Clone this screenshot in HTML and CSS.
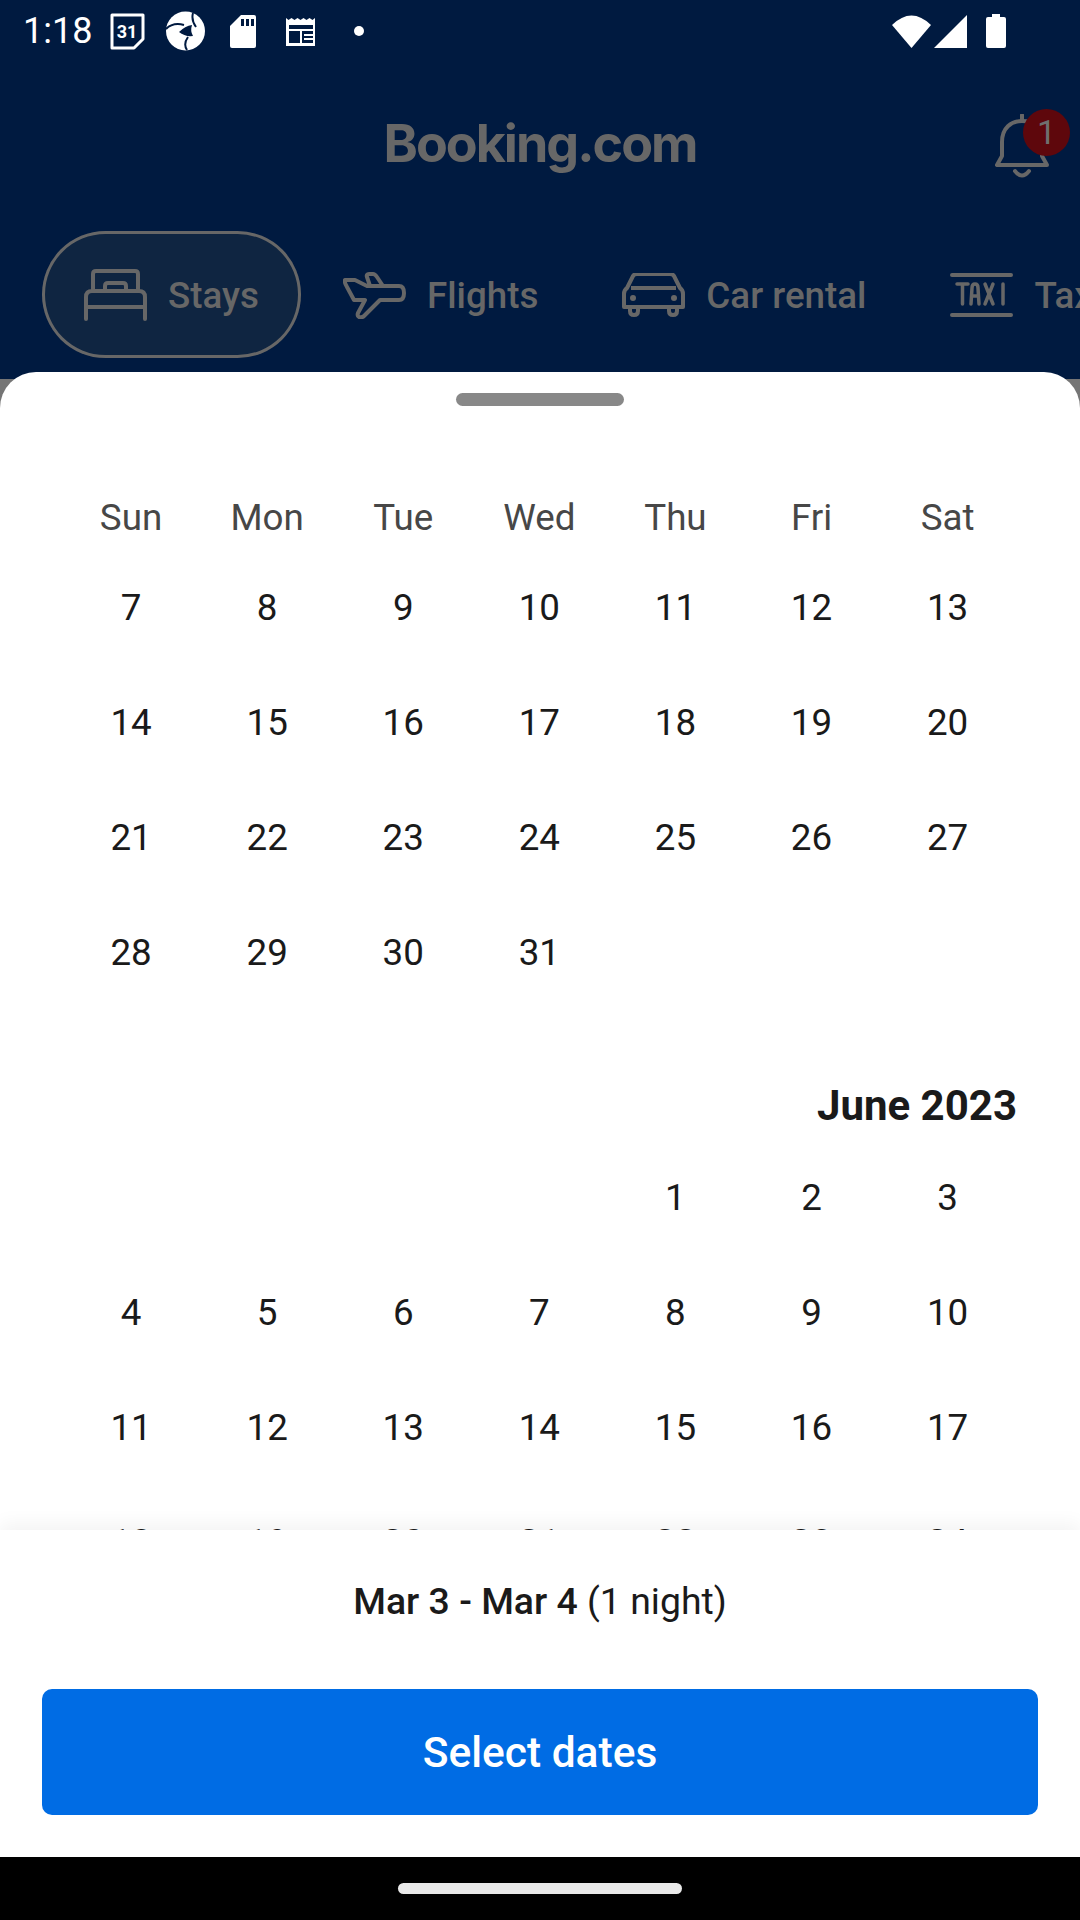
FILE: index.html
```html
<!DOCTYPE html>
<html>

<head>
    <meta charset="UTF-8">
    <meta name="viewport" content="width=device-width, initial-scale=1.0">
    <title>Select dates</title>
    <link rel="stylesheet" href="styles.css">
</head>

<body>
    <!-- Status bar -->
    <div class="status">
        <span class="time">1:18</span>
        <div class="status-icons">
            <span class="slot">
                <svg width="35" height="37" viewBox="0 0 35 37"><path d="M2 2h31v24l-9 9H2z" fill="none" stroke="#fff" stroke-width="3" stroke-linejoin="round"/><text x="17" y="25" class="cal-num">31</text></svg>
            </span>
            <span class="slot">
                <svg width="39" height="40" viewBox="0 0 39 40"><circle cx="19.500" cy="20" r="19.500" fill="#fff"/><path d="M13 21q6-6 13-7q-2 6 1 11q-8 1-14-4z" fill="#001a40"/><path d="M0 18q7-7 18-4M27 2q-2 7 3 14M21 39q-4-6 1-13" fill="none" stroke="#001a40" stroke-width="2"/></svg>
            </span>
            <span class="slot">
                <svg width="26" height="33" viewBox="0 0 26 33"><path d="M11 0h13a2 2 0 0 1 2 2v29a2 2 0 0 1-2 2H2a2 2 0 0 1-2-2V11z" fill="#fff"/><path d="M11 4h3v7h-3zM16 4h3v7h-3zM21 4h3v7h-3z" fill="#001a40"/></svg>
            </span>
            <span class="slot">
                <svg width="32" height="30" viewBox="0 0 32 30"><path d="M1 2l2.500 2 3-2 3 2 3-2 3 2 3-2 3 2 3-2 3 2 2.500-2v28H1z" fill="#fff"/><path d="M4 9h24v18H4z" fill="#001a40"/><path d="M4 13h24v2H4zM15 15h2v12h-2zM19 18h9v2h-9zM19 22h9v2h-9z" fill="#fff"/></svg>
            </span>
            <span class="slot"><span class="dot"></span></span>
        </div>
        <div class="status-right">
            <svg width="39" height="33" viewBox="0 0 39 33"><path d="M0 10Q19.500-9 39 10L19.500 33z" fill="#fff"/></svg>
            <svg width="33" height="33" viewBox="0 0 33 33"><path d="M33 0v33H0z" fill="#fff"/></svg>
            <svg width="20" height="34" viewBox="0 0 20 34"><path d="M6 0h8v3h4a2 2 0 0 1 2 2v27a2 2 0 0 1-2 2H2a2 2 0 0 1-2-2V5a2 2 0 0 1 2-2h4z" fill="#fff"/></svg>
        </div>
    </div>

    <!-- Header with logo and bell -->
    <div class="header">
        <span class="logo">Booking.com</span>
        <div class="bell">
            <svg width="54" height="64" viewBox="0 0 54 64"><path d="M2 51h50l-5-9V28C47 14 38 7 27 7S7 14 7 28v14z" fill="none" stroke="#676767" stroke-width="4" stroke-linejoin="round"/><path d="M27 1v6" stroke="#676767" stroke-width="4" stroke-linecap="round"/><path d="M20 57q7 9 14 0" fill="none" stroke="#676767" stroke-width="4" stroke-linecap="round"/></svg>
            <span class="badge">1</span>
        </div>
    </div>

    <!-- Product tabs -->
    <div class="tabs">
        <div class="tab active">
            <svg width="63" height="52" viewBox="0 0 63 52"><path d="M2 50V28q0-6 6-6h47q6 0 6 6v22M2 38h59M9 22V5q0-3 3-3h39q3 0 3 3v17M21 22v-5q0-3 3-3h15q3 0 3 3v5" fill="none" stroke="#676767" stroke-width="4" stroke-linecap="round"/></svg>
            <span>Stays</span>
        </div>
        <div class="tab">
            <svg width="63" height="48" viewBox="0 0 63 48"><path d="M2 9l10 0 12 6h32q5 0 5 7t-5 7H37L21 45q-2 2-5 1-2-1-1-4l7-13H11L4 16Q1 11 2 9zM27 15l-3-9q-1-3 2-3h4q2 0 4 3l6 9" fill="none" stroke="#676767" stroke-width="4" stroke-linejoin="round"/></svg>
            <span>Flights</span>
        </div>
        <div class="tab">
            <svg width="63" height="44" viewBox="0 0 63 44"><path d="M2 34V21q0-4 3-6l6-12q1-2 4-2h33q3 0 4 2l6 12q3 2 3 6v13zM9 15h45M8 34v4q0 4 4 4t4-4v-4M47 34v4q0 4 4 4t4-4v-4" fill="none" stroke="#676767" stroke-width="4" stroke-linejoin="round"/><circle cx="11" cy="25" r="3" fill="#676767"/><circle cx="52" cy="25" r="3" fill="#676767"/></svg>
            <span>Car rental</span>
        </div>
        <div class="tab">
            <svg width="63" height="44" viewBox="0 0 63 44"><path d="M2 2h59M2 42h59" stroke="#676767" stroke-width="4" stroke-linecap="round"/><path d="M7 11h11M12.500 11v20M21 31l1-16q0-4 3-4t3 4l1 16M22 23h6M35 11l8 20M43 11l-8 20M53 11v20" fill="none" stroke="#676767" stroke-width="3.500" stroke-linecap="round"/></svg>
            <span>Taxis</span>
        </div>
    </div>

    <!-- Bottom sheet -->
    <div class="sheet-back">
        <div class="sheet">
            <div class="handle"></div>
            <div class="cal-head cal-grid">
                <span>Sun</span><span>Mon</span><span>Tue</span><span>Wed</span><span>Thu</span><span>Fri</span><span>Sat</span>
            </div>
            <div class="cal-scroll">
                <div class="cal-grid">
                    <span>7</span><span>8</span><span>9</span><span>10</span><span>11</span><span>12</span><span>13</span>
                    <span>14</span><span>15</span><span>16</span><span>17</span><span>18</span><span>19</span><span>20</span>
                    <span>21</span><span>22</span><span>23</span><span>24</span><span>25</span><span>26</span><span>27</span>
                    <span>28</span><span>29</span><span>30</span><span>31</span>
                </div>
                <h2 class="month">June 2023</h2>
                <div class="cal-grid">
                    <span></span><span></span><span></span><span></span><span>1</span><span>2</span><span>3</span>
                    <span>4</span><span>5</span><span>6</span><span>7</span><span>8</span><span>9</span><span>10</span>
                    <span>11</span><span>12</span><span>13</span><span>14</span><span>15</span><span>16</span><span>17</span>
                    <span>18</span><span>19</span><span>20</span><span>21</span><span>22</span><span>23</span><span>24</span>
                </div>
            </div>
            <div class="footer">
                <p class="summary"><b>Mar 3 - Mar 4</b> (1 night)</p>
                <button type="button" class="select">Select dates</button>
            </div>
        </div>
    </div>

    <!-- Gesture bar -->
    <div class="nav">
        <div class="pill"></div>
    </div>
</body>

</html>
```

FILE: styles.css
```css
* {
    box-sizing: border-box;
}

body {
    margin: 0;
    width: 1080px;
    height: 1920px;
    overflow: hidden;
    display: flex;
    flex-direction: column;
    background-color: #001a40;
    font-family: Roboto, sans-serif;
}

svg {
    display: block;
    flex: none;
}

.status {
    height: 62px;
    display: flex;
    align-items: center;
    padding: 0 0 0 23px;
    color: #FFFFFF;
}

.time {
    font-size: 36px;
    width: 75px;
}

.status-icons {
    display: flex;
    align-items: center;
}

.slot {
    width: 58px;
    display: flex;
    justify-content: center;
}

.cal-num {
    fill: #FFFFFF;
    font-family: Roboto, sans-serif;
    font-size: 18px;
    font-weight: 700;
    text-anchor: middle;
}

.dot {
    width: 10px;
    height: 10px;
    border-radius: 50%;
    background-color: #FFFFFF;
}

.status-right {
    margin-left: auto;
    margin-right: 74px;
    display: flex;
    align-items: center;
    gap: 3px;
}

.status-right svg:last-child {
    margin-left: 16px;
}

.header {
    height: 169px;
    display: flex;
    align-items: center;
    justify-content: center;
    padding-bottom: 7px;
    position: relative;
}

.logo {
    color: #676767;
    font-family: Inter, sans-serif;
    font-size: 52px;
    font-weight: 700;
    letter-spacing: -2px;
}

.bell {
    position: absolute;
    left: 995px;
    top: 52px;
}

.badge {
    position: absolute;
    left: 28px;
    top: -5px;
    width: 47px;
    height: 47px;
    border-radius: 50%;
    background-color: #5e070c;
    color: #6f6f6f;
    font-size: 34px;
    line-height: 47px;
    text-align: center;
}

.tabs {
    height: 141px;
    display: flex;
    align-items: flex-start;
    overflow: hidden;
    padding-left: 42px;
}

.tab {
    height: 127px;
    flex: none;
    display: flex;
    align-items: center;
    gap: 21px;
    padding: 0 42px;
    border-radius: 64px;
    color: #676767;
    font-size: 36.75px;
    font-weight: 500;
}

.tab span {
    margin-top: 2px;
}

.tab.active {
    background-color: #0f2541;
    box-shadow: inset 0 0 0 3px #676767;
}

.sheet-back {
    flex: 1;
    min-height: 0;
    background: linear-gradient(#001a40 7px, #757575 7px);
}

.sheet {
    height: 100%;
    display: flex;
    flex-direction: column;
    background-color: #FFFFFF;
    border-radius: 36px 36px 0 0;
}

.handle {
    flex: none;
    width: 168px;
    height: 13px;
    margin: 21px auto 0;
    border-radius: 7px;
    background-color: #888888;
}

.cal-grid {
    display: grid;
    grid-template-columns: repeat(7, 136.1px);
    grid-auto-rows: 115px;
    margin-left: 63px;
    color: #1a1a1a;
    font-size: 36.75px;
    text-align: center;
    line-height: 115px;
}

.cal-head {
    flex: none;
    margin-top: 82px;
    grid-auto-rows: 60px;
    line-height: 60px;
    color: #474747;
    font-size: 36.75px;
}

.cal-scroll {
    flex: 1;
    min-height: 0;
    overflow: hidden;
    padding-top: 2px;
}

.month {
    margin: 0;
    height: 130px;
    padding: 68px 63px 0 0;
    color: #1a1a1a;
    font-size: 42px;
    font-weight: 700;
    line-height: 56px;
    text-align: right;
}

.footer {
    flex: none;
    height: 327px;
    padding: 0 42px;
    position: relative;
    background-color: #FFFFFF;
    box-shadow: 0 -6px 18px rgba(0, 0, 0, 0.05);
}

.summary {
    margin: 0;
    height: 159px;
    padding-top: 47px;
    color: #1a1a1a;
    font-size: 37.4px;
    line-height: 48px;
    text-align: center;
}

.summary b {
    font-weight: 500;
}

.select {
    display: block;
    width: 100%;
    height: 126px;
    padding-top: 2px;
    border: none;
    border-radius: 10px;
    background-color: #006ce4;
    color: #FFFFFF;
    font-family: Roboto, sans-serif;
    font-size: 42.5px;
    font-weight: 500;
}

.nav {
    flex: none;
    height: 63px;
    padding-top: 26px;
    background-color: #000000;
}

.pill {
    width: 284px;
    height: 11px;
    margin: 0 auto;
    border-radius: 6px;
    background-color: #e9e9e9;
}
```
